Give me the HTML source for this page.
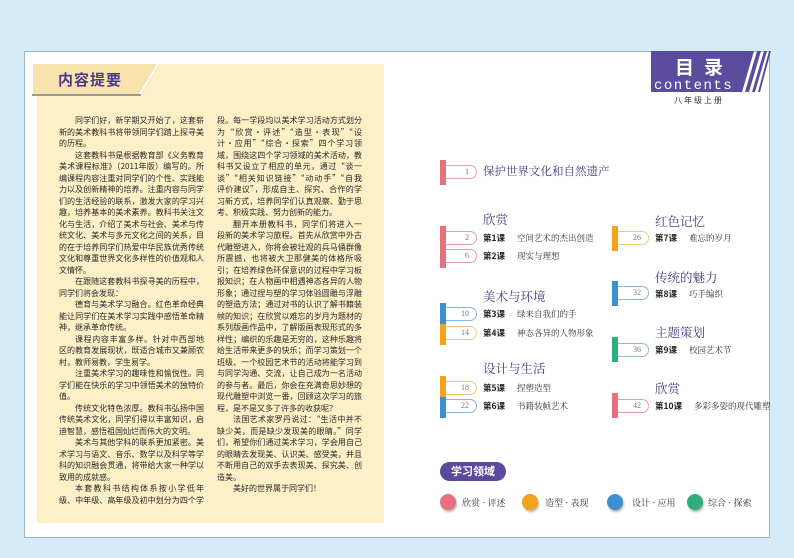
<!DOCTYPE html>
<html><head><meta charset="utf-8"><style>
*{margin:0;padding:0;box-sizing:border-box}
body{width:794px;height:558px;background:#d6ebf8;position:relative;overflow:hidden;font-family:"Liberation Sans","Noto Sans CJK SC",sans-serif}
.page{position:absolute;left:24px;top:51px;width:746px;height:487px;background:#fff;border:1px solid #9fb3c4}
.panel{position:absolute;left:37px;top:64px;width:347px;height:459px;background:#fdefc6}
.col{position:absolute;top:115px;width:145px;font-size:8px;line-height:11.5px;color:#2a2a2a;font-family:"Noto Sans CJK SC",sans-serif}
.col div{white-space:nowrap;text-align:justify;text-align-last:justify;height:11.5px;overflow:hidden}
.col div.e{text-align-last:left}
.col div.i{padding-left:16px}
.abs{position:absolute}
.bar{position:absolute;width:6px}
.tab{position:absolute;height:14px;border:1px solid;border-left:none;border-radius:0 8px 8px 0;font-size:8px;font-family:"Liberation Serif",serif;color:#777;text-align:right;padding-right:7px;line-height:12px;background:#fff}
.h{position:absolute;font-family:"Noto Serif CJK SC",serif;color:#4b3a7c;font-size:12.5px;line-height:15px}
.r{position:absolute;font-size:8.5px;line-height:12px;color:#333;white-space:nowrap}
.r b{font-family:"Noto Sans CJK SC",sans-serif;font-weight:700;color:#222;margin-right:12px}
.r span{font-family:"Noto Serif CJK SC",serif}
.dot{position:absolute;width:16px;height:16px;border-radius:50%;box-shadow:1px 2px 2px rgba(0,0,0,.3)}
.lg{position:absolute;font-family:"Noto Serif CJK SC",serif;font-size:9px;color:#333;top:496px}
</style></head><body>
<div class="page"></div>
<div class="panel"></div>
<svg class="abs" style="left:30px;top:62px" width="135" height="36">
<polygon points="3,2 130,2 112,32 3,32" fill="#f8e3ad"/>
<line x1="128" y1="2" x2="110" y2="32" stroke="#fff" stroke-width="2"/>
<line x1="2" y1="33" x2="111" y2="33" stroke="#9a9a9a" stroke-width="2"/>
</svg>
<div class="abs" style="left:58px;top:69px;font-size:15px;font-weight:700;color:#4b3a8c;font-family:'Noto Sans CJK SC',sans-serif;letter-spacing:1px">内容提要</div>

<div class="col" style="left:59px">
<div class="i">同学们好，新学期又开始了，这套崭</div>
<div>新的美术教科书将带领同学们踏上探寻美</div>
<div class="e">的历程。</div>
<div class="i">这套教科书是根据教育部《义务教育</div>
<div>美术课程标准》（2011年版）编写的。所</div>
<div>编课程内容注重对同学们的个性、实践能</div>
<div>力以及创新精神的培养。注重内容与同学</div>
<div>们的生活经验的联系，激发大家的学习兴</div>
<div>趣，培养基本的美术素养。教科书关注文</div>
<div>化与生活，介绍了美术与社会、美术与传</div>
<div>统文化、美术与多元文化之间的关系，目</div>
<div>的在于培养同学们热爱中华民族优秀传统</div>
<div>文化和尊重世界文化多样性的价值观和人</div>
<div class="e">文情怀。</div>
<div class="i">在跟随这套教科书探寻美的历程中，</div>
<div class="e">同学们将会发现：</div>
<div class="i">德育与美术学习融合。红色革命经典</div>
<div>能让同学们在美术学习实践中感悟革命精</div>
<div class="e">神，继承革命传统。</div>
<div class="i">课程内容丰富多样。针对中西部地</div>
<div>区的教育发展现状，既适合城市又兼顾农</div>
<div class="e">村，教师易教，学生易学。</div>
<div class="i">注重美术学习的趣味性和愉悦性。同</div>
<div>学们能在快乐的学习中领悟美术的独特价</div>
<div class="e">值。</div>
<div class="i">传统文化特色浓厚。教科书弘扬中国</div>
<div>传统美术文化，同学们得以丰富知识，启</div>
<div class="e">迪智慧，感悟祖国灿烂而伟大的文明。</div>
<div class="i">美术与其他学科的联系更加紧密。美</div>
<div>术学习与语文、音乐、数学以及科学等学</div>
<div>科的知识融会贯通，将带给大家一种学以</div>
<div class="e">致用的成就感。</div>
<div class="i">本套教科书结构体系按小学低年</div>
<div>级、中年级、高年级及初中划分为四个学</div>
</div>

<div class="col" style="left:217px">
<div>段。每一学段均以美术学习活动方式划分</div>
<div>为“欣赏·评述”“造型·表现”“设</div>
<div>计·应用”“综合·探索”四个学习领</div>
<div>域，围绕这四个学习领域的美术活动，教</div>
<div>科书又设立了相应的单元，通过“谈一</div>
<div>谈”“相关知识链接”“动动手”“自我</div>
<div>评价建议”，形成自主、探究、合作的学</div>
<div>习新方式，培养同学们认真观察、勤于思</div>
<div class="e">考、积极实践、努力创新的能力。</div>
<div class="i">翻开本册教科书，同学们将进入一</div>
<div>段新的美术学习旅程。首先从欣赏中外古</div>
<div>代雕塑进入，你将会被壮观的兵马俑群像</div>
<div>所震撼，也将被大卫那健美的体格所吸</div>
<div>引；在培养绿色环保意识的过程中学习板</div>
<div>报知识；在人物画中相遇神态各异的人物</div>
<div>形象；通过捏与塑的学习体验圆雕与浮雕</div>
<div>的塑造方法；通过对书的认识了解书籍装</div>
<div>帧的知识；在欣赏以难忘的岁月为题材的</div>
<div>系列版画作品中，了解版画表现形式的多</div>
<div>样性；编织的乐趣是无穷的，这种乐趣将</div>
<div>给生活带来更多的快乐；而学习策划一个</div>
<div>班级、一个校园艺术节的活动将能学习到</div>
<div>与同学沟通、交流，让自己成为一名活动</div>
<div>的参与者。最后，你会在充满奇思妙想的</div>
<div>现代雕塑中浏览一番，回顾这次学习的旅</div>
<div class="e">程，是不是又多了许多的收获呢？</div>
<div class="i">法国艺术家罗丹说过：“生活中并不</div>
<div>缺少美，而是缺少发现美的眼睛。”同学</div>
<div>们，希望你们通过美术学习，学会用自己</div>
<div>的眼睛去发现美、认识美、感受美，并且</div>
<div>不断用自己的双手去表现美、探究美、创</div>
<div class="e">造美。</div>
<div class="i e">美好的世界属于同学们！</div>
</div>

<!-- header -->
<svg class="abs" style="left:651px;top:51px" width="120" height="42">
<polygon points="0,0 103,0 91,41 0,41" fill="#5b4c9e"/>
<polygon points="106,0 110,0 98,41 94,41" fill="#5b4c9e"/>
<polygon points="113,0 116,0 104,41 101,41" fill="#5b4c9e"/>
<polygon points="118,0 120,0 109,41 107,41" fill="#5b4c9e"/>
</svg>
<div class="abs" style="left:675px;top:55px;font-size:19px;font-weight:700;color:#fff;font-family:'Noto Sans CJK SC',sans-serif;letter-spacing:10px;line-height:24px">目录</div>
<div class="abs" style="left:654px;top:79px;font-size:14px;color:#fff;font-family:'Liberation Mono',monospace;letter-spacing:1.5px;line-height:14px">contents</div>
<div class="abs" style="left:674px;top:95px;font-size:8px;color:#333;letter-spacing:2px;font-family:'Noto Sans CJK SC',sans-serif">八年级上册</div>

<div class="bar" style="left:440px;top:160px;height:25px;background:#e8707e"></div>
<div class="tab" style="left:446px;top:165px;width:31px;border-color:#e8a0a8">1</div>
<div class="h" style="left:483px;top:164px;font-size:11.5px">保护世界文化和自然遗产</div>

<div class="h" style="left:483px;top:212px">欣赏</div>
<div class="bar" style="left:440px;top:226px;height:42px;background:#e8707e"></div>
<div class="tab" style="left:446px;top:231px;width:31px;border-color:#e8a0a8">2</div>
<div class="tab" style="left:446px;top:249px;width:31px;border-color:#e8a0a8">6</div>
<div class="r" style="left:483px;top:232px"><b>第1课</b><span>空间艺术的杰出创造</span></div>
<div class="r" style="left:483px;top:250px"><b>第2课</b><span>现实与理想</span></div>

<div class="h" style="left:483px;top:289px">美术与环境</div>
<div class="bar" style="left:440px;top:303px;height:21px;background:#3d8fd0"></div>
<div class="bar" style="left:440px;top:324px;height:21px;background:#f4a11c"></div>
<div class="tab" style="left:446px;top:307px;width:31px;border-color:#86b6e0">10</div>
<div class="tab" style="left:446px;top:326px;width:31px;border-color:#f0c878">14</div>
<div class="r" style="left:483px;top:308px"><b>第3课</b><span>绿来自我们的手</span></div>
<div class="r" style="left:483px;top:327px"><b>第4课</b><span>神态各异的人物形象</span></div>

<div class="h" style="left:483px;top:361px">设计与生活</div>
<div class="bar" style="left:440px;top:376px;height:21px;background:#f4a11c"></div>
<div class="bar" style="left:440px;top:397px;height:21px;background:#3d8fd0"></div>
<div class="tab" style="left:446px;top:381px;width:31px;border-color:#f0c878">18</div>
<div class="tab" style="left:446px;top:399px;width:31px;border-color:#86b6e0">22</div>
<div class="r" style="left:483px;top:382px"><b>第5课</b><span>捏塑造型</span></div>
<div class="r" style="left:483px;top:400px"><b>第6课</b><span>书籍装帧艺术</span></div>

<div class="h" style="left:655px;top:214px">红色记忆</div>
<div class="bar" style="left:612px;top:226px;height:25px;background:#f4a11c"></div>
<div class="tab" style="left:618px;top:231px;width:31px;border-color:#f0c878">26</div>
<div class="r" style="left:655px;top:232px"><b>第7课</b><span>难忘的岁月</span></div>

<div class="h" style="left:655px;top:270px">传统的魅力</div>
<div class="bar" style="left:612px;top:281px;height:25px;background:#3d8fd0"></div>
<div class="tab" style="left:618px;top:286px;width:31px;border-color:#86b6e0">32</div>
<div class="r" style="left:655px;top:288px"><b>第8课</b><span>巧手编织</span></div>

<div class="h" style="left:655px;top:325px">主题策划</div>
<div class="bar" style="left:612px;top:337px;height:25px;background:#2fae7a"></div>
<div class="tab" style="left:618px;top:343px;width:31px;border-color:#86c8a8">36</div>
<div class="r" style="left:655px;top:344px"><b>第9课</b><span>校园艺术节</span></div>

<div class="h" style="left:655px;top:381px">欣赏</div>
<div class="bar" style="left:612px;top:393px;height:25px;background:#e8707e"></div>
<div class="tab" style="left:618px;top:399px;width:31px;border-color:#e8a0a8">42</div>
<div class="r" style="left:655px;top:400px"><b>第10课</b><span>多彩多姿的现代雕塑</span></div>

<div class="abs" style="left:440px;top:462px;width:66px;height:19px;border-radius:10px;background:#5b4a9b;color:#fff;font-weight:700;font-size:11px;line-height:19px;text-align:center;font-family:'Noto Sans CJK SC',sans-serif">学习领域</div>
<div class="dot" style="left:440px;top:494px;background:#e8707e"></div>
<div class="lg" style="left:462px">欣赏 · 评述</div>
<div class="dot" style="left:522px;top:494px;background:#f4a11c"></div>
<div class="lg" style="left:545px">造型 · 表现</div>
<div class="dot" style="left:607px;top:494px;background:#3d8fd0"></div>
<div class="lg" style="left:632px">设计 · 应用</div>
<div class="dot" style="left:687px;top:494px;background:#2fae7a"></div>
<div class="lg" style="left:708px">综合 · 探索</div>
</body></html>
